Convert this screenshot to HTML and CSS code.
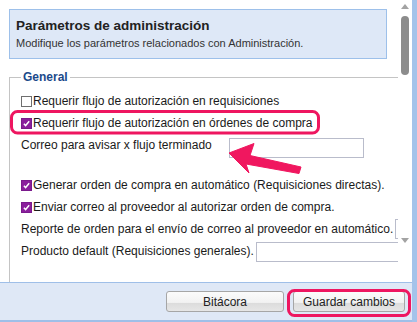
FILE: index.html
```html
<!DOCTYPE html>
<html lang="es">
<head>
    <meta charset="UTF-8">
    <title>Parámetros de administración</title>
    <link rel="stylesheet" href="styles.css">
</head>
<body>
<div class="window">
    <div class="content">
        <div class="scroll-area">
            <!-- encabezado -->
            <div class="header-box">
                <div class="header-title">Parámetros de administración</div>
                <div class="header-sub">Modifique los parámetros relacionados con Administración.</div>
            </div>

            <fieldset class="group">
                <legend>General</legend>
                <div class="row">
                    <span class="check"></span>
                    <span>Requerir flujo de autorización en requisiciones</span>
                </div>
                <div class="row">
                    <span class="check checked"><svg viewBox="0 0 11 11"><path d="M2.3 5.8 L4.4 8 L8.8 2.8" /></svg></span>
                    <span>Requerir flujo de autorización en órdenes de compra</span>
                </div>
                <div class="row row-gap">
                    <span>Correo para avisar x flujo terminado</span>
                    <span class="field field-mail"></span>
                </div>
                <div class="row">
                    <span class="check checked"><svg viewBox="0 0 11 11"><path d="M2.3 5.8 L4.4 8 L8.8 2.8" /></svg></span>
                    <span>Generar orden de compra en automático (Requisiciones directas).</span>
                </div>
                <div class="row">
                    <span class="check checked"><svg viewBox="0 0 11 11"><path d="M2.3 5.8 L4.4 8 L8.8 2.8" /></svg></span>
                    <span>Enviar correo al proveedor al autorizar orden de compra.</span>
                </div>
                <div class="row">
                    <span>Reporte de orden para el envío de correo al proveedor en automático.</span>
                    <span class="field field-report"></span>
                </div>
                <div class="row">
                    <span>Producto default (Requisiciones generales).</span>
                    <span class="field field-product"></span>
                </div>
            </fieldset>
        </div>

        <!-- barra de desplazamiento -->
        <div class="scrollbar">
            <span class="arrow-up"></span>
            <span class="thumb"></span>
            <span class="track"></span>
            <span class="arrow-down"></span>
        </div>
    </div>

    <div class="footer">
        <button class="btn btn-log">Bitácora</button>
        <button class="btn btn-save">Guardar cambios</button>
    </div>
</div>

<!-- marcas de la captura -->
<svg class="marks" width="417" height="322" viewBox="0 0 417 322">
    <rect x="11.5" y="111.5" width="307" height="21.5" rx="6" />
    <rect x="288.5" y="290.5" width="121" height="25" rx="6" />
    <polygon class="arrow" points="229,153 254,143.5 250,155.5 301,167 299,173.5 246,164 249,173" />
</svg>
</body>
</html>
```

FILE: styles.css
```css
* {
    margin: 0;
    padding: 0;
    box-sizing: border-box;
}

body {
    font-family: "Liberation Sans", Arial, sans-serif;
    font-size: 12px;
    color: #1a1a1a;
    background-color: #ffffff;
    width: 417px;
    height: 322px;
    overflow: hidden;
    position: relative;
}

.window {
    display: flex;
    flex-direction: column;
    height: 322px;
    border-right: 5px solid #a4c3ea;
}

.content {
    display: flex;
    height: 282px;
}

.scroll-area {
    width: 398px;
    overflow: hidden;
    padding: 9px 0 0 9px;
}

/* encabezado */
.header-box {
    width: 378px;
    height: 50px;
    background-color: #dee8f7;
    border: 1px solid #9dc0ea;
    padding: 7px 6px 0 6px;
}

.header-title {
    font-size: 13.5px;
    font-weight: bold;
    color: #222;
    line-height: 18px;
}

.header-sub {
    font-size: 11px;
    color: #333;
    line-height: 17px;
}

/* grupo General */
.group {
    width: 420px;
    margin-top: 10px;
    border: 1px solid #c4c4c4;
    border-bottom: none;
    padding: 5px 0 0 11px;
    height: 240px;
}

.group legend {
    font-weight: bold;
    color: #1b4a8a;
    padding: 0 2px;
    line-height: 16px;
}

.row {
    display: flex;
    align-items: center;
    height: 22px;
    white-space: nowrap;
}

.row-gap {
    margin-bottom: 18px;
}

.check {
    width: 11px;
    height: 11px;
    border: 1px solid #6f6f6f;
    background-color: #fff;
    margin-right: 1px;
    display: flex;
}

.check.checked {
    background-color: #8a1f9c;
    border-color: #7a1a8c;
}

.check svg {
    width: 9px;
    height: 9px;
}

.check path {
    fill: none;
    stroke: #fff;
    stroke-width: 1.8;
}

.field {
    height: 20px;
    border: 1px solid #b9bccb;
    background-color: #fff;
    flex-shrink: 0;
}

.field-mail {
    width: 135px;
    margin-left: 17px;
    margin-top: 6px;
}

.field-report {
    width: 60px;
    margin-left: 2px;
}

.field-product {
    width: 160px;
    margin-left: 2px;
    margin-top: 2px;
}

/* barra de desplazamiento */
.scrollbar {
    width: 14px;
    display: flex;
    flex-direction: column;
    align-items: center;
    padding-top: 4px;
}

.arrow-up {
    width: 0;
    height: 0;
    border-left: 4px solid transparent;
    border-right: 4px solid transparent;
    border-bottom: 5px solid #a3a3a3;
}

.thumb {
    width: 8px;
    height: 59px;
    margin-top: 7px;
    background-color: #8c8c8c;
    border-radius: 4px;
}

.track {
    flex: 1;
}

.arrow-down {
    width: 0;
    height: 0;
    border-left: 4px solid transparent;
    border-right: 4px solid transparent;
    border-top: 5px solid #a3a3a3;
    margin-bottom: 39px;
}

/* pie */
.footer {
    height: 40px;
    background-color: #dfe8f6;
    border-top: 1px solid #9fbfe8;
    border-bottom: 2px solid #9fbfe8;
    display: flex;
    justify-content: flex-end;
    padding: 8px 7px 0 0;
    gap: 9px;
}

.btn {
    height: 21px;
    font-family: "Liberation Sans", Arial, sans-serif;
    font-size: 12px;
    color: #222;
    border: 1px solid #a6a6a6;
    border-radius: 3px;
    background: linear-gradient(to bottom, #fbfbfb 0%, #f2f2f2 55%, #dcdcdc 60%, #e6e6e6 100%);
}

.btn-log {
    width: 118px;
}

.btn-save {
    width: 112px;
}

/* marcas */
.marks {
    position: absolute;
    left: 0;
    top: 0;
    pointer-events: none;
}

.marks rect {
    fill: none;
    stroke: #ee1660;
    stroke-width: 3;
}

.marks .arrow {
    fill: #f0175f;
    stroke: #f0175f;
    stroke-width: 1;
    stroke-linejoin: round;
}
```
